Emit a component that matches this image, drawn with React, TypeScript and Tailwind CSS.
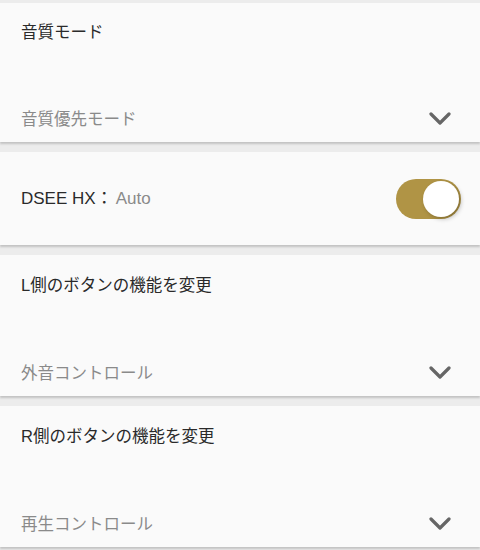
import React, { useState } from "react";

type SelectRowProps = {
  title: string;
  value: string;
  first?: boolean;
};

function Chevron() {
  return (
    <svg width="22" height="14" viewBox="0 0 22 14" fill="none">
      <polyline
        points="2,2 11,11 20,2"
        stroke="#666666"
        strokeWidth="3.2"
        strokeLinecap="round"
        strokeLinejoin="round"
      />
    </svg>
  );
}

function SelectCard({ title, value, first }: SelectRowProps) {
  return (
    <div
      className={
        (first ? "h-[139px] pt-[17px] " : "h-[141px] pt-[18px] ") +
        "bg-[#fafafa] shadow-[0_2px_2px_rgba(0,0,0,0.18)] flex flex-col justify-between pb-[11px] pl-[21px] pr-[29px]"
      }
    >
      <div className="text-[16.5px] leading-6 text-[#2a2a2a]">{title}</div>
      <div className="flex items-center justify-between">
        <span className="text-[16.5px] leading-6 text-[#8a8a8a]">{value}</span>
        <Chevron />
      </div>
    </div>
  );
}

function Toggle() {
  const [on, setOn] = useState(true);
  return (
    <button
      onClick={() => setOn(!on)}
      className={
        "w-[65px] h-[40px] rounded-full p-[2px] flex items-center " +
        (on ? "bg-[#b09445] justify-end" : "bg-[#cccccc] justify-start")
      }
    >
      <span className="w-[36px] h-[36px] rounded-full bg-white shadow-[2px_2px_4px_rgba(0,0,0,0.25)]" />
    </button>
  );
}

export default function App() {
  return (
    <div
      className="h-[550px] overflow-hidden bg-[#ececec] flex flex-col gap-[10px] pt-[3px]"
      style={{ fontFamily: "'Liberation Sans', 'Noto Sans CJK JP', sans-serif" }}
    >
      <SelectCard first title="音質モード" value="音質優先モード" />
      <div className="h-[93px] bg-[#fafafa] shadow-[0_2px_2px_rgba(0,0,0,0.18)] flex items-center justify-between pl-[21px] pr-[19px]">
        <div className="text-[17px] leading-6 flex items-center">
          <span className="text-[#2a2a2a]">DSEE HX</span>
          <span className="text-[#2a2a2a]">：</span>
          <span className="text-[#8a8a8a] ml-[3px]">Auto</span>
        </div>
        <Toggle />
      </div>
      <SelectCard title="L側のボタンの機能を変更" value="外音コントロール" />
      <SelectCard title="R側のボタンの機能を変更" value="再生コントロール" />
    </div>
  );
}
